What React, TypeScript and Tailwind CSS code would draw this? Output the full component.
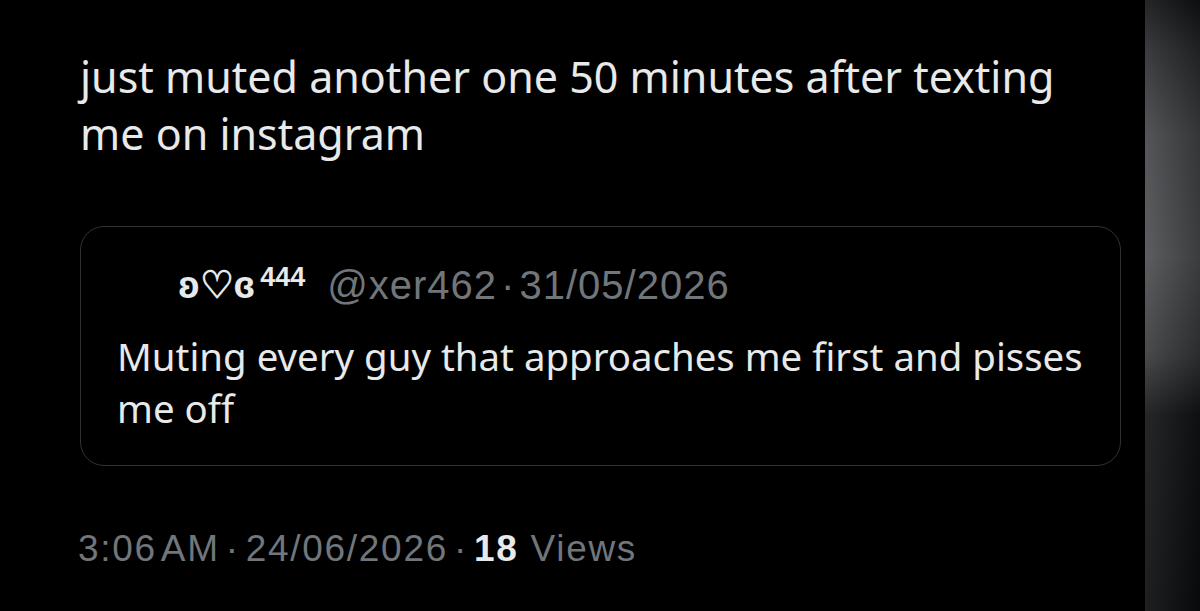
export default function App() {
  return (
    <div className="flex h-[611px] w-[1200px] overflow-hidden bg-black">
      <div className="flex flex-1 flex-col pl-[80px] pr-[24px] pt-[48px]">
        <p className="text-[43px] leading-[57px] text-[#e7e9ea]" style={{ fontFamily: '"Noto Sans", sans-serif' }}>
          just muted another one 50 minutes after texting me on instagram
        </p>

        <div className="mt-[64px] h-[240px] rounded-[24px] border border-[#2f3235] pl-[36px] pr-[24px] pt-[38px]">
          <div
            className="flex items-start text-[38px] leading-[40px]"
            style={{ fontFamily: '"Liberation Sans", Arial, sans-serif' }}
          >
            <span className="h-[44px] w-[48px] shrink-0" />
            <span className="ml-[13px] font-bold text-[#e7e9ea]">ʚ♡ɞ</span>
            <span className="ml-[5px] mt-[-8px] text-[27px] font-bold text-[#e7e9ea]">444</span>
            <span className="ml-[22px] text-[40px] tracking-[1px] text-[#71767b]">
              @xer462<span className="mx-[4px]">·</span>31/05/2026
            </span>
          </div>
          <p
            className="mt-[21px] text-[38.4px] leading-[52px] text-[#e7e9ea]"
            style={{ fontFamily: '"Noto Sans", sans-serif' }}
          >
            Muting every guy that approaches me first and pisses me off
          </p>
        </div>

        <div
          className="-ml-[2px] mt-[63px] text-[37px] leading-[40px] tracking-[1.7px] text-[#71767b]"
          style={{ fontFamily: '"Liberation Sans", Arial, sans-serif' }}
        >
          3:06<span className="ml-[4px]">AM</span>
          <span className="mx-[6px]">·</span>24/06/2026<span className="mx-[6px]">·</span>
          <span className="font-bold text-[#e7e9ea]">18</span> Views
        </div>
      </div>

      {/* phone edge on the right */}
      <div className="w-[55px] shrink-0 bg-[linear-gradient(to_right,rgba(255,255,255,0.08),rgba(0,0,0,0.25)),linear-gradient(to_bottom,#111214_0%,#2a2b2e_8%,#46474a_22%,#4f5053_42%,#3a3b3d_58%,#131416_68%,#0b0c0d_100%)]" />
    </div>
  );
}
